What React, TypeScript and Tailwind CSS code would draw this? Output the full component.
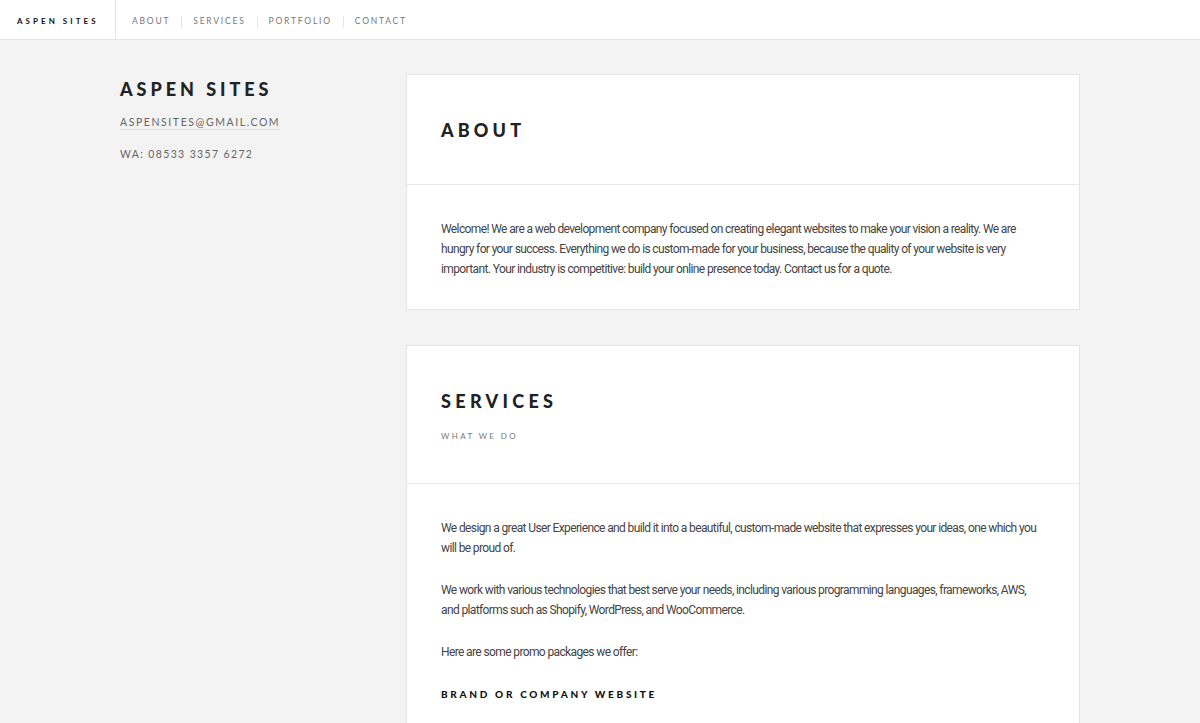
export default function App() {
  const nav = ['About', 'Services', 'Portfolio', 'Contact'];
  const body = "font-['Roboto',sans-serif] text-[12px] tracking-[-0.62px] leading-[20px] text-[#444]";

  return (
    <div className="min-h-screen bg-[#f3f3f3] text-[#333] font-['Lato',sans-serif]">
      {/* Top bar */}
      <header className="h-10 bg-white border-b border-[#e6e6e6] flex items-stretch">
        <div className="w-[116px] flex items-center pl-[17px] pt-[2px] border-r border-[#e6e6e6] text-[8px] font-bold tracking-[0.38em] text-[#111] uppercase">
          Aspen Sites
        </div>
        <nav className="flex items-center pl-4 pt-[4px]">
          {nav.map((item, i) => (
            <div key={item} className="flex items-center">
              {i > 0 && <span className="w-px h-3 bg-[#e6e6e6] mx-[11px]" />}
              <a className="text-[8.5px] tracking-[0.21em] uppercase text-[#777]">{item}</a>
            </div>
          ))}
        </nav>
      </header>

      <div className="w-[960px] mx-auto flex pt-[34px]">
        {/* Sidebar */}
        <aside className="w-[286px] shrink-0">
          <h1 className="text-[18px] font-black tracking-[0.22em] uppercase text-[#222] leading-none mt-[6px]">
            Aspen Sites
          </h1>
          <div className="mt-[14px] leading-[16px]">
            <span className="text-[10.5px] tracking-[0.15em] uppercase text-[#666] border-b border-[#ddd] pb-[1px]">
              aspensites@gmail.com
            </span>
          </div>
          <p className="mt-[16px] leading-[16px] text-[10.5px] tracking-[0.13em] uppercase text-[#666]">WA: 08533 3357 6272</p>
        </aside>

        {/* Main */}
        <main className="w-[674px] flex flex-col gap-[35px] pb-10">
          <section className="bg-white border border-[#e5e5e5]">
            <div className="h-[110px] border-b border-[#e8e8e8] px-[34px] flex items-center">
              <h2 className="text-[18px] font-black tracking-[0.23em] uppercase text-[#222] leading-none">About</h2>
            </div>
            <div className={`px-[34px] pt-[34px] pb-[30px] ${body}`}>
              <p>
                Welcome! We are a web development company focused on creating elegant websites to make your vision a reality. We are hungry for your success. Everything we do is custom-made for your business, because the quality of your website is very important. Your industry is competitive: build your online presence today. Contact us for a quote.
              </p>
            </div>
          </section>

          <section className="bg-white border border-[#e5e5e5]">
            <div className="h-[138px] border-b border-[#e8e8e8] px-[34px] flex flex-col justify-center">
              <h2 className="text-[18px] font-black tracking-[0.24em] uppercase text-[#222] leading-none mt-[4px]">Services</h2>
              <p className="mt-[20px] text-[8px] tracking-[0.3em] uppercase text-[#777]">What we do</p>
            </div>
            <div className={`px-[34px] pt-[34px] pb-[30px] flex flex-col gap-[22px] ${body}`}>
              <p>
                We design a great User Experience and build it into a beautiful, custom-made website that expresses your ideas, one which you will be proud of.
              </p>
              <p>
                We work with various technologies that best serve your needs, including various programming languages, frameworks, AWS, and platforms such as Shopify, WordPress, and WooCommerce.
              </p>
              <p>Here are some promo packages we offer:</p>
              <h3 className="font-['Lato',sans-serif] text-[10px] font-black tracking-[0.27em] uppercase text-[#111]">
                Brand or Company Website
              </h3>
              <p className="font-['Lato',sans-serif] text-[13px] tracking-[0.04em] text-[#444] -mt-[6px]">
                A website to represent your company's presence in the digital space.
              </p>
            </div>
          </section>
        </main>
      </div>
    </div>
  );
}
